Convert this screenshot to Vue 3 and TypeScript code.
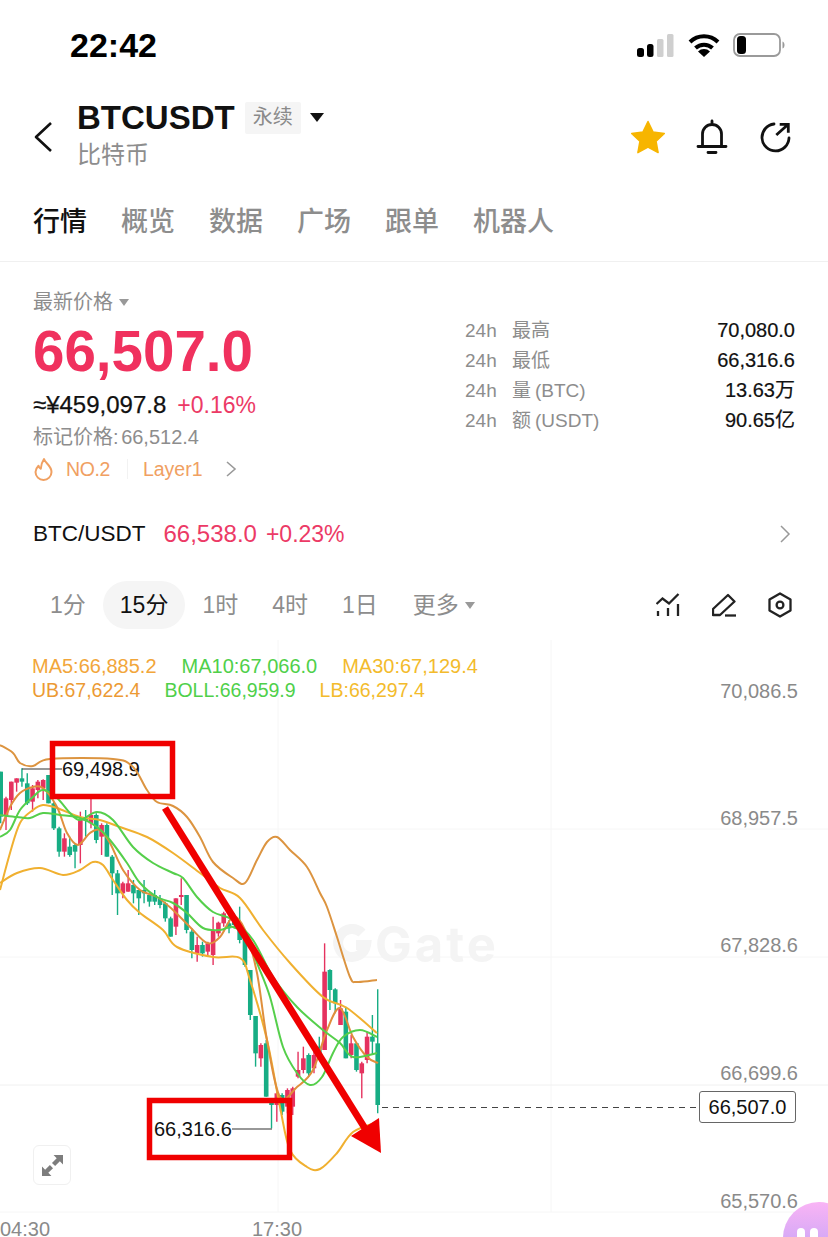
<script setup lang="ts">
type Point = [number, number]
// high, low, body top, body bottom, colour — in 3x units from the top of the chart crop
type Candle = [number, number, number, number, 'g' | 'r']

const tabs = ['行情', '概览', '数据', '广场', '跟单', '机器人']
const periods = ['1分', '15分', '1时', '4时', '1日']

const stats = [
  { label: '最高', unit: '', value: '70,080.0' },
  { label: '最低', unit: '', value: '66,316.6' },
  { label: '量', unit: '(BTC)', value: '13.63万' },
  { label: '额', unit: '(USDT)', value: '90.65亿' },
]

const legend = [
  [
    { text: 'MA5:66,885.2', color: '#f2a63a' },
    { text: 'MA10:67,066.0', color: '#4fd04a' },
    { text: 'MA30:67,129.4', color: '#f3bb2c' },
  ],
  [
    { text: 'UB:67,622.4', color: '#ec9a34' },
    { text: 'BOLL:66,959.9', color: '#4fd04a' },
    { text: 'LB:66,297.4', color: '#f3bb2c' },
  ],
]

const axis = [
  { text: '70,086.5', y: 698 },
  { text: '68,957.5', y: 825 },
  { text: '67,828.6', y: 952 },
  { text: '66,699.6', y: 1080 },
  { text: '65,570.6', y: 1208 },
]

const raw: Candle[] = [
  [125, 280, 125, 260, 'g'], [200, 300, 205, 255, 'r'], [155, 240, 155, 210, 'r'], [145, 185, 145, 158, 'r'],
  [115, 170, 145, 155, 'g'], [130, 225, 160, 220, 'g'], [165, 245, 175, 215, 'r'], [150, 205, 155, 180, 'r'],
  [148, 210, 150, 175, 'r'], [135, 220, 135, 220, 'g'], [215, 300, 220, 295, 'g'], [290, 380, 295, 365, 'g'],
  [310, 380, 325, 365, 'r'], [320, 380, 350, 375, 'g'], [340, 415, 345, 365, 'g'], [245, 400, 270, 345, 'r'],
  [240, 320, 265, 272, 'g'], [205, 295, 255, 280, 'r'], [250, 340, 255, 330, 'g'], [280, 375, 285, 320, 'r'],
  [280, 380, 285, 380, 'g'], [375, 495, 380, 430, 'g'], [420, 555, 430, 490, 'g'], [455, 505, 460, 490, 'r'],
  [420, 485, 460, 485, 'r'], [450, 520, 465, 490, 'g'], [480, 555, 480, 505, 'g'], [450, 520, 480, 490, 'g'],
  [490, 530, 495, 515, 'g'], [480, 525, 495, 515, 'g'], [495, 535, 505, 525, 'g'], [515, 575, 520, 565, 'g'],
  [560, 620, 565, 620, 'g'], [505, 615, 505, 590, 'r'], [445, 525, 495, 500, 'r'], [495, 610, 495, 600, 'g'],
  [595, 685, 605, 660, 'g'], [620, 695, 645, 670, 'r'], [635, 680, 645, 670, 'g'], [635, 680, 640, 665, 'r'],
  [560, 705, 600, 675, 'r'], [575, 620, 578, 610, 'r'], [545, 590, 550, 580, 'r'], [570, 610, 580, 595, 'g'],
  [550, 595, 575, 585, 'g'], [530, 640, 580, 630, 'g'], [600, 710, 620, 705, 'g'], [720, 870, 720, 855, 'g'],
  [858, 1010, 858, 970, 'g'], [940, 1010, 945, 985, 'r'], [930, 1100, 940, 1100, 'g'], [1105, 1195, 1110, 1125, 'g'],
  [1085, 1175, 1090, 1125, 'r'], [1090, 1155, 1095, 1145, 'g'], [1075, 1150, 1080, 1130, 'r'], [1070, 1155, 1075, 1130, 'r'],
  [965, 1045, 1020, 1040, 'r'], [950, 1030, 985, 1020, 'r'], [970, 1040, 975, 1030, 'g'], [950, 1030, 975, 1015, 'r'],
  [920, 990, 950, 985, 'g'], [640, 960, 725, 960, 'r'], [718, 840, 720, 780, 'g'], [775, 850, 778, 820, 'g'],
  [810, 885, 835, 885, 'r'], [830, 985, 845, 985, 'g'], [915, 985, 940, 975, 'r'], [940, 1025, 940, 1020, 'g'],
  [995, 1105, 1000, 1030, 'r'], [905, 1000, 920, 990, 'r'], [855, 975, 920, 935, 'g'], [778, 1150, 940, 1125, 'g'],
]

const toY = (v: number) => 730 + v / 3

const candles = raw.map(([hi, lo, top, bottom, c], i) => ({
  x: 0.7 + i * 5.31,
  hi: toY(hi),
  lo: toY(lo),
  top: toY(top),
  h: Math.max(2, (bottom - top) / 3),
  color: c === 'g' ? '#17ad84' : '#e5325f',
}))

// catmull-rom through the points so the lines come out smooth
function smooth(p: Point[]): string {
  let d = `M${p[0][0]} ${p[0][1]}`
  for (let i = 0; i < p.length - 1; i++) {
    const a = p[Math.max(i - 1, 0)]
    const b = p[i]
    const c = p[i + 1]
    const e = p[Math.min(i + 2, p.length - 1)]
    const c1 = [b[0] + (c[0] - a[0]) / 6, b[1] + (c[1] - a[1]) / 6]
    const c2 = [c[0] - (e[0] - b[0]) / 6, c[1] - (e[1] - b[1]) / 6]
    d += `C${c1[0].toFixed(1)} ${c1[1].toFixed(1)} ${c2[0].toFixed(1)} ${c2[1].toFixed(1)} ${c[0]} ${c[1]}`
  }
  return d
}

const lines = [
  {
    color: '#dc9440',
    pts: [[0, 745], [13, 753], [20, 763], [33, 766], [50, 759], [113, 759], [133, 767], [147, 790], [157, 802], [173, 806], [187, 817], [200, 837], [213, 862], [233, 878], [245, 883], [257, 860], [267, 842], [277, 837], [290, 850], [307, 867], [320, 893], [327, 907], [337, 937], [350, 977], [357, 982], [377, 980]] as Point[],
  },
  {
    color: '#f0b030',
    pts: [[0, 890], [10, 853], [20, 823], [33, 810], [43, 805], [57, 808], [80, 817], [100, 820], [120, 827], [147, 837], [173, 853], [200, 873], [220, 888], [240, 898], [263, 930], [290, 963], [323, 997], [347, 1008], [377, 1033]] as Point[],
  },
  {
    color: '#f0b030',
    pts: [[0, 883], [17, 873], [40, 868], [63, 875], [80, 870], [93, 862], [103, 865], [113, 880], [127, 900], [140, 913], [163, 930], [177, 947], [213, 957], [240, 958], [250, 980], [267, 1040], [280, 1107], [290, 1150], [307, 1167], [320, 1169], [337, 1153], [353, 1132], [378, 1122]] as Point[],
  },
  {
    color: '#e08f3c',
    pts: [[0, 830], [10, 807], [20, 793], [33, 787], [43, 788], [57, 807], [67, 833], [78, 845], [90, 833], [100, 830], [110, 843], [123, 870], [140, 890], [157, 897], [173, 910], [190, 927], [207, 943], [220, 937], [233, 917], [245, 930], [257, 973], [267, 1040], [280, 1097], [297, 1087], [313, 1070], [327, 1030], [340, 1008], [353, 1037], [367, 1057], [378, 1063]] as Point[],
  },
  {
    color: '#55cf4b',
    pts: [[0, 837], [10, 830], [20, 810], [33, 797], [43, 790], [57, 798], [70, 813], [80, 820], [97, 812], [113, 820], [133, 847], [153, 863], [173, 873], [183, 878], [197, 897], [213, 912], [233, 920], [253, 940], [273, 977], [297, 1007], [323, 1030], [340, 1043], [353, 1057], [377, 1053]] as Point[],
  },
  {
    color: '#55cf4b',
    pts: [[0, 815], [17, 817], [30, 818], [43, 813], [60, 815], [80, 818], [97, 827], [110, 840], [127, 863], [140, 883], [157, 897], [173, 903], [187, 913], [203, 928], [220, 930], [233, 927], [247, 937], [257, 963], [270, 997], [283, 1047], [297, 1073], [310, 1085], [322, 1077], [333, 1053], [343, 1037], [360, 1030], [377, 1037]] as Point[],
  },
].map((l) => ({ color: l.color, d: smooth(l.pts) }))
</script>

<template>
  <div class="page">
    <div class="status">
      <span class="time">22:42</span>
      <div class="status-icons">
        <svg width="38" height="24" viewBox="0 0 38 24">
          <rect x="0" y="15" width="7" height="9" rx="2.5" fill="#000" />
          <rect x="10" y="11" width="6.500" height="13" rx="2.5" fill="#000" />
          <rect x="20" y="6" width="6.500" height="18" rx="1.500" fill="#cfcfcf" />
          <rect x="30" y="1" width="6.500" height="23" rx="1.500" fill="#cfcfcf" />
        </svg>
        <svg width="32" height="24" viewBox="0 0 32 24">
          <path d="M2 9a20 20 0 0 1 28 0M7.500 15a12.500 12.500 0 0 1 17 0" fill="none" stroke="#000" stroke-width="4" />
          <path d="M16 24l-6-5.500a8.500 8.500 0 0 1 12 0z" fill="#000" />
        </svg>
        <svg width="52" height="24" viewBox="0 0 52 24">
          <rect x="1" y="1" width="46" height="22" rx="6" fill="none" stroke="#9a9a9a" stroke-width="1.800" />
          <rect x="4" y="3" width="9" height="18" rx="3.500" fill="#000" />
          <path d="M49.500 8.500c1.500.5 2 2 2 3.500s-.5 3-2 3.500z" fill="#9a9a9a" />
        </svg>
      </div>
    </div>

    <header class="head">
      <svg class="back" width="22" height="32" viewBox="0 0 22 32">
        <path d="M18 2L3 16l15 14" fill="none" stroke="#111" stroke-width="2.600" stroke-linejoin="round" />
      </svg>
      <div class="symbol">
        <div class="symbol-top">
          <span class="pair">BTCUSDT</span>
          <span class="perp">永续</span>
          <span class="caret"></span>
        </div>
        <div class="cn-name">比特币</div>
      </div>
      <div class="head-icons">
        <svg width="36" height="34" viewBox="0 0 36 34">
          <path d="M18 1.500l5 10.400 11.300 1.500-8.200 7.900 2 11.300L18 27.200 7.900 32.600l2-11.300-8.200-7.900L13 11.900z" fill="#f7b500" stroke="#f7b500" stroke-linejoin="round" stroke-width="1.500" />
        </svg>
        <svg width="32" height="36" viewBox="0 0 32 36">
          <path d="M16 2v3M6.500 27V15a9.500 9.500 0 0 1 19 0v12M2 27.500h28M12 33.500h8" fill="none" stroke="#111" stroke-width="2.800" stroke-linecap="round" />
        </svg>
        <svg width="34" height="34" viewBox="0 0 34 34">
          <path d="M16 4A13.500 13.500 0 1 0 31 18" fill="none" stroke="#111" stroke-width="2.800" stroke-linecap="round" />
          <path d="M18.300 15L30.300 4.300M21.700 4.300H30.300V12.700" fill="none" stroke="#111" stroke-width="2.800" />
        </svg>
      </div>
    </header>

    <nav class="tabs">
      <span v-for="(t, i) in tabs" :key="t" class="tab" :class="{ on: i === 0 }">{{ t }}</span>
    </nav>

    <section class="overview">
      <div class="price-col">
        <div class="latest">最新价格<span class="mini-caret"></span></div>
        <div class="price">66,507.0</div>
        <div class="fiat"><span class="fiat-value">≈¥459,097.8</span><span class="pink">+0.16%</span></div>
        <div class="mark">标记价格: <span>66,512.4</span></div>
        <div class="rank">
          <svg width="20" height="24" viewBox="0 0 20 24">
            <path d="M11 2c1 4 7.500 6.500 7.500 13a8 8 0 0 1-16 0c0-3 1.500-4.800 3-6.300.4 1.700 1 2.500 2.300 3C8 8 9 5 11 2z" fill="none" stroke="#f0a062" stroke-width="2" stroke-linejoin="round" />
          </svg>
          <span class="no">NO.2</span>
          <i class="sep"></i>
          <span>Layer1</span>
          <svg class="rank-more" width="12" height="18" viewBox="0 0 12 18">
            <path d="M2 2l8 7-8 7" fill="none" stroke="#999" stroke-width="1.600" />
          </svg>
        </div>
      </div>
      <div class="stats">
        <div v-for="s in stats" :key="s.label" class="stat">
          <span class="h24">24h</span>
          <span class="stat-label">{{ s.label }}<em v-if="s.unit">{{ s.unit }}</em></span>
          <span class="stat-value">{{ s.value }}</span>
        </div>
      </div>
    </section>

    <div class="spot">
      <span class="spot-name">BTC/USDT</span>
      <span class="spot-price">66,538.0</span>
      <span class="spot-change">+0.23%</span>
      <svg width="12" height="20" viewBox="0 0 12 20">
        <path d="M2 2l8 8-8 8" fill="none" stroke="#999" stroke-width="1.500" />
      </svg>
    </div>

    <div class="periods">
      <span v-for="(p, i) in periods" :key="p" class="period" :class="{ on: i === 1 }">{{ p }}</span>
      <span class="period more">更多<span class="mini-caret"></span></span>
      <div class="tools">
        <svg width="24" height="24" viewBox="0 0 24 24">
          <path d="M0.500 11L6.500 5.500 13 10.500 22.500 1" fill="none" stroke="#222" stroke-width="2.300" />
          <path d="M2 18v5M12 15v8M22 11v12" fill="none" stroke="#222" stroke-width="2.300" />
        </svg>
        <svg width="24" height="24" viewBox="0 0 24 24">
          <path d="M1 22V16L16 2 22.500 8.500 8 22z" fill="none" stroke="#222" stroke-width="2.300" stroke-linejoin="round" />
          <path d="M13 22.500h11" fill="none" stroke="#222" stroke-width="2.300" />
        </svg>
        <svg width="24" height="26" viewBox="0 0 24 26">
          <path d="M12 1.500l10.500 6v11l-10.500 6-10.500-6v-11z" fill="none" stroke="#222" stroke-width="2.300" stroke-linejoin="round" />
          <circle cx="12" cy="13" r="3.400" fill="none" stroke="#222" stroke-width="2.300" />
        </svg>
      </div>
    </div>

    <div class="chart">
      <svg class="plot" width="828" height="597" viewBox="0 640 828 597">
        <g stroke="#f6f6f6" stroke-width="1">
          <path d="M0 829H828M0 957H828M0 1212H828M278 640V1212M551 640V1212" />
          <path d="M0 1085H828" stroke="#f0f0f0" />
        </g>

        <g class="watermark">
          <path d="M362 933a14 14 0 1 0 4 12h-10" fill="none" stroke="#f4f4f4" stroke-width="10" />
          <text x="375" y="962">Gate</text>
        </g>

        <g v-for="(c, i) in candles" :key="i">
          <line :x1="c.x" :x2="c.x" :y1="c.hi" :y2="c.lo" :stroke="c.color" stroke-width="1.400" />
          <rect :x="c.x - 2.3" :y="c.top" width="4.600" :height="c.h" :fill="c.color" />
        </g>

        <path d="M22 769H62M232 1129H272" fill="none" stroke="#333" stroke-width="1.200" />
        <text class="mark-label" x="62" y="776">69,498.9</text>
        <text class="mark-label" x="154" y="1136">66,316.6</text>

        <path v-for="(l, i) in lines" :key="i" :d="l.d" fill="none" :stroke="l.color" stroke-width="2" />

        <!-- hand drawn annotations on top of the chart -->
        <g fill="none" stroke="#f00000" stroke-width="5.500">
          <rect x="52.500" y="743.500" width="120" height="53" />
          <rect x="149.500" y="1100.500" width="140" height="57" />
          <path d="M165 808L366 1130" stroke-width="7" />
        </g>
        <path d="M379 1118L351 1136L381 1153z" fill="#f00000" />

        <path d="M382 1107.500H699" fill="none" stroke="#444" stroke-width="1" stroke-dasharray="6 5" />
        <text v-for="a in axis" :key="a.text" class="axis" x="798" :y="a.y" text-anchor="end">{{ a.text }}</text>
        <text class="axis" x="0" y="1236">04:30</text>
        <text class="axis" x="252" y="1236">17:30</text>
      </svg>

      <div class="legend">
        <div v-for="(row, i) in legend" :key="i" class="legend-row">
          <span v-for="m in row" :key="m.text" :style="{ color: m.color }">{{ m.text }}</span>
        </div>
      </div>

      <div class="last-price">66,507.0</div>

      <div class="expand">
        <svg width="21" height="21" viewBox="0 0 20 20">
          <path d="M11 0h9v9l-3-3-4.500 4.500-3-3L14 3zM9 20H0v-9l3 3 4.500-4.500 3 3L6 17z" fill="#7d7d7d" />
        </svg>
      </div>

      <div class="blob"><i></i><i></i></div>
    </div>
  </div>
</template>

<style scoped>
.page {
  position: relative;
  width: 828px;
  height: 1237px;
  overflow: hidden;
  background: #fff;
  font-family: "Liberation Sans", "Noto Sans CJK SC", sans-serif;
  color: #111;
}

.status {
  display: flex;
  justify-content: space-between;
  align-items: center;
  height: 90px;
  padding: 0 43px 0 70px;
}
.time {
  font-size: 34px;
  font-weight: 700;
  color: #000;
}
.status-icons {
  display: flex;
  align-items: center;
  gap: 13px;
}

.head {
  display: flex;
  align-items: center;
  height: 80px;
  padding: 0 36px 0 33px;
}
.back {
  margin-right: 22px;
  margin-top: 14px;
}
.symbol {
  margin-top: 9px;
}
.symbol-top {
  display: flex;
  align-items: center;
}
.pair {
  font-size: 33px;
  font-weight: 700;
  line-height: 38px;
}
.perp {
  margin-left: 10px;
  padding: 0 8px;
  height: 32px;
  line-height: 30px;
  background: #f5f5f5;
  border-radius: 2px;
  font-size: 20px;
  color: #8a8a8a;
}
.caret {
  margin-left: 9px;
  border-style: solid;
  border-width: 9px 7px 0;
  border-color: #111 transparent transparent;
}
.cn-name {
  margin-top: 2px;
  font-size: 24px;
  line-height: 32px;
  color: #8d8d8d;
}
.head-icons {
  margin-left: auto;
  margin-top: 14px;
  display: flex;
  align-items: center;
  gap: 30px;
}

.tabs {
  display: flex;
  gap: 34px;
  height: 92px;
  padding: 31px 33px 0;
  border-bottom: 1px solid #f0f0f0;
  box-sizing: border-box;
}
.tab {
  font-size: 27px;
  font-weight: 500;
  line-height: 42px;
  color: #8d8d8d;
}
.tab.on {
  color: #111;
}

.overview {
  display: flex;
  justify-content: space-between;
  height: 232px;
  padding: 0 33px;
  box-sizing: border-box;
}
.price-col {
  padding-top: 28px;
}
.latest {
  font-size: 20px;
  line-height: 24px;
  color: #8d8d8d;
  display: flex;
  align-items: center;
}
.mini-caret {
  display: inline-block;
  margin-left: 6px;
  border-style: solid;
  border-width: 7px 5px 0;
  border-color: #999 transparent transparent;
}
.price {
  margin-top: 3px;
  font-size: 56.5px;
  line-height: 70px;
  font-weight: 700;
  color: #f0315e;
}
.fiat {
  display: flex;
  align-items: baseline;
  gap: 11px;
  font-size: 23px;
  line-height: 30px;
  margin-top: 3px;
}
.fiat-value {
  font-size: 24px;
  -webkit-text-stroke: 0.25px #111;
}
.pink {
  color: #ec3a66;
}
.mark {
  font-size: 20px;
  line-height: 26px;
  margin-top: 4px;
  color: #8d8d8d;
}
.mark span {
  margin-left: -3px;
}
.rank {
  display: flex;
  align-items: center;
  margin-top: 3px;
  height: 32px;
  font-size: 19.5px;
  color: #f0a062;
}
.no {
  margin-left: 13px;
  letter-spacing: -0.4px;
}
.sep {
  width: 1px;
  height: 20px;
  background: #f2f2f2;
  margin: 0 15px 0 17px;
}
.rank-more {
  margin-left: 22px;
}

.stats {
  width: 330px;
  padding-top: 53px;
}
.stat {
  display: flex;
  align-items: baseline;
  height: 30px;
  line-height: 30px;
  font-size: 19px;
  color: #8d8d8d;
}
.h24 {
  width: 47px;
}
.stat-label em {
  font-style: normal;
  margin-left: 4px;
}
.stat-value {
  margin-left: auto;
  color: #111;
  font-size: 20px;
  -webkit-text-stroke: 0.2px #111;
}

.spot {
  display: flex;
  align-items: center;
  height: 50px;
  padding: 0 37px 0 33px;
  font-size: 23px;
  margin-top: 15px;
}
.spot-name {
  font-size: 22.5px;
}
.spot-price {
  margin-left: 18px;
  font-size: 24px;
  color: #ec3a66;
}
.spot-change {
  margin-left: 9px;
  color: #ec3a66;
}
.spot svg {
  margin-left: auto;
}

.periods {
  display: flex;
  align-items: center;
  height: 50px;
  margin-top: 21px;
  padding: 0 36px 0 33px;
  font-size: 23px;
  color: #8d8d8d;
}
.period {
  padding: 0 17px;
  line-height: 48px;
}
.period.on {
  background: #f5f5f5;
  border-radius: 24px;
  color: #111;
}
.period.more {
  display: flex;
  align-items: center;
  margin-left: 18px;
  padding: 0;
}
.tools {
  margin-left: auto;
  display: flex;
  align-items: center;
  gap: 32px;
}

.chart {
  position: absolute;
  left: 0;
  top: 640px;
  width: 828px;
  height: 597px;
}
.plot {
  position: absolute;
  left: 0;
  top: 0;
}
.legend {
  position: relative;
  padding: 14px 0 0 32px;
  font-size: 20px;
}
.legend-row {
  display: flex;
  gap: 25px;
  line-height: 24px;
}
.legend-row + .legend-row {
  gap: 24px;
  font-size: 19.5px;
}
.axis {
  font-size: 20px;
  fill: #8a8a8a;
}
.mark-label {
  font-size: 20px;
  fill: #111;
}
.watermark text {
  font-family: Inter, "Liberation Sans", sans-serif;
  font-size: 49px;
  font-weight: 700;
  letter-spacing: 3px;
  fill: #f4f4f4;
}
.last-price {
  position: absolute;
  left: 699px;
  top: 451px;
  width: 97px;
  height: 32px;
  box-sizing: border-box;
  border: 1px solid #666;
  border-radius: 3px;
  background: #fff;
  font-size: 20px;
  line-height: 30px;
  text-align: center;
  color: #111;
}
.expand {
  position: absolute;
  left: 33px;
  top: 505px;
  width: 38px;
  height: 40px;
  display: flex;
  align-items: center;
  justify-content: center;
  border: 1px solid #f0f0f0;
  border-radius: 6px;
  box-sizing: border-box;
}
.blob {
  position: absolute;
  left: 783px;
  top: 562px;
  width: 72px;
  height: 72px;
  border-radius: 50%;
  background: linear-gradient(#f9b4f5, #b59ff7);
  display: flex;
  justify-content: flex-start;
  gap: 5px;
  padding: 26px 0 0 14px;
  box-sizing: border-box;
}
.blob i {
  width: 8px;
  height: 16px;
  border-radius: 4px;
  background: #fff;
}
</style>

<style>
html,
body {
  margin: 0;
  background: #fff;
}
</style>
